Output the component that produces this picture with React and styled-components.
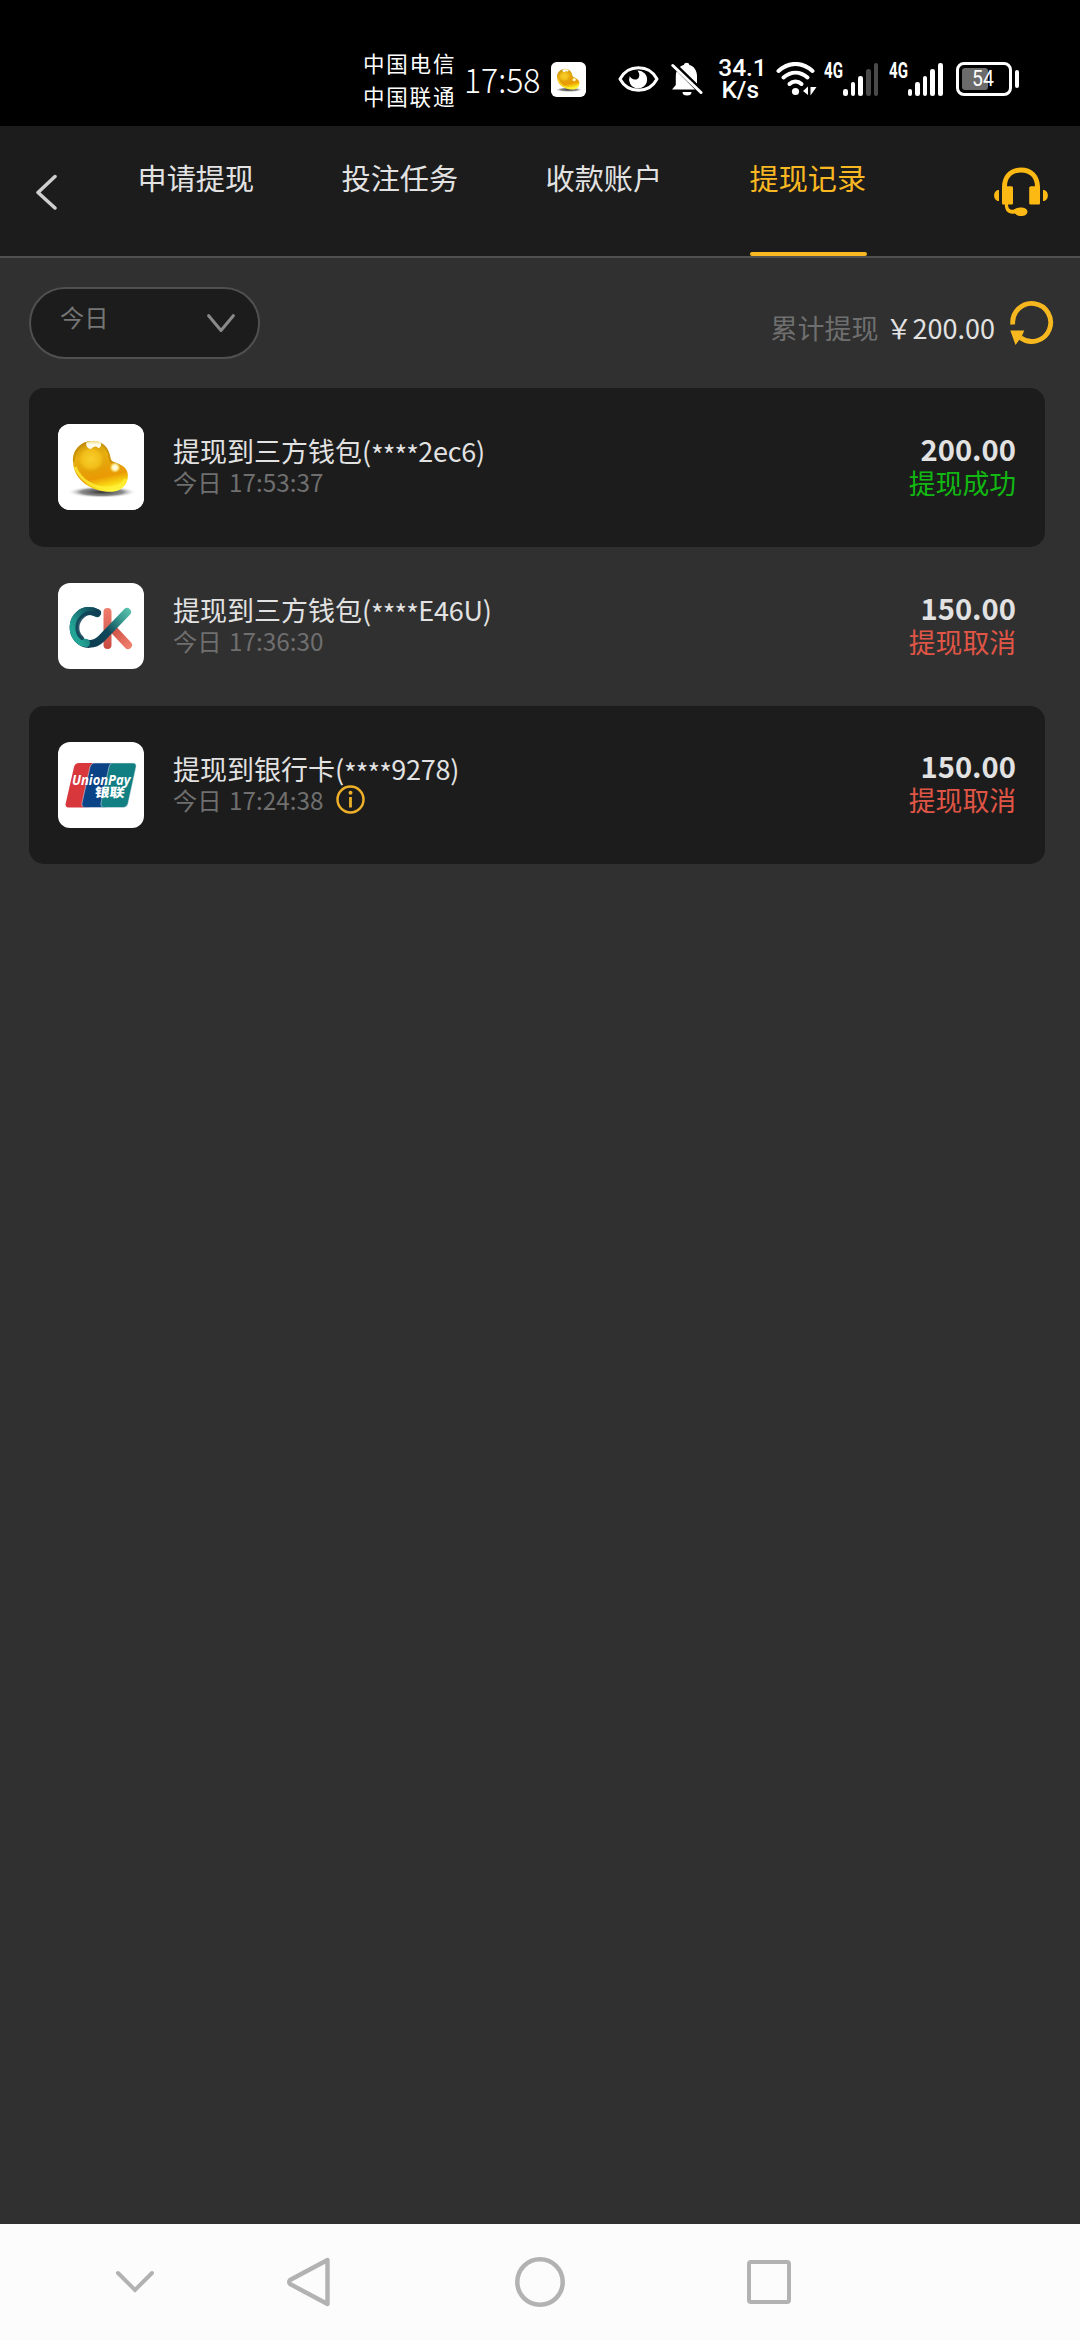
import React, { useId } from "react";
import styled, { createGlobalStyle } from "styled-components";

const cjk = '"Noto Sans CJK SC", sans-serif';

const Global = createGlobalStyle`
  * { box-sizing: border-box; }
  body { margin: 0; background: #303030; font-family: ${cjk}; }
  svg { display: block; flex: none; }
`;

const Screen = styled.div`
  width: 1080px;
  height: 2340px;
  display: flex;
  flex-direction: column;
  background: #303030;
  color: #e2e2e2;
  overflow: hidden;
`;

/* ---------- status bar ---------- */
const StatusBar = styled.div`
  height: 126px;
  flex: none;
  padding: 32px 61px 0 363px;
  display: flex;
  align-items: center;
  background: #000;
  color: #fff;
`;
const Carriers = styled.div`
  width: 94px;
  font-size: 21.5px;
  letter-spacing: 1.8px;
  line-height: 33px;
  white-space: nowrap;
`;
const Clock = styled.div`
  width: 77px;
  margin-left: 8px;
  font-size: 34px;
  line-height: 40px;
  font-weight: 300;
  white-space: nowrap;
`;
const Squeezed = styled.span`
  display: inline-block;
  transform: scaleX(${(p) => p.$by});
  transform-origin: left center;
`;
const StatusIcon = styled.div`
  margin-left: ${(p) => p.$gap}px;
  flex: none;
`;
const Speed = styled.div`
  width: 44px;
  margin-left: 15px;
  font: 500 24.5px/22px Roboto, sans-serif;
  text-align: center;
  white-space: nowrap;
`;
const Signal = styled.div`
  width: 55px;
  height: 34px;
  margin-left: ${(p) => p.$gap}px;
  display: flex;
  align-items: flex-start;
`;
const Generation = styled.div`
  width: 18px;
  font: 700 21.5px/17px Roboto, sans-serif;
  white-space: nowrap;
`;
const Bars = styled.div`
  height: 34px;
  display: flex;
  align-items: flex-end;
  gap: 3px;
  margin-left: 1px;
`;
const Bar = styled.div`
  width: 4.6px;
  height: ${(p) => p.$height}px;
  border-radius: 2.3px;
  background: ${(p) => (p.$on ? "#fff" : "#4a4a4a")};
`;
const Battery = styled.div`
  margin-left: 13px;
  display: flex;
  align-items: center;
  gap: 3px;
`;
const BatteryBody = styled.div`
  width: 56px;
  height: 34px;
  border: 3px solid #fff;
  border-radius: 8px;
  padding: 3px;
`;
const BatteryFill = styled.div`
  width: 26px;
  height: 22px;
  border-radius: 3px;
  background: #6b6b6b;
  padding-left: 10px;
  font: 400 22px/22px Roboto, sans-serif;
`;
const BatteryCap = styled.div`
  width: 4px;
  height: 18px;
  border-radius: 2px;
  background: #fff;
`;

/* ---------- header ---------- */
const Header = styled.header`
  height: 132px;
  flex: none;
  display: flex;
  align-items: flex-start;
  background: #1c1c1c;
  border-bottom: 2px solid #505050;
`;
const BackButton = styled.div`
  width: 137.5px;
  padding: 48px 0 0 35px;
`;
const Tabs = styled.nav`
  display: flex;
  gap: 87px;
`;
const Tab = styled.div`
  width: 117px;
  height: 130px;
  display: flex;
  flex-direction: column;
  justify-content: space-between;
  font-size: 29.16px;
  line-height: 103px;
  white-space: nowrap;
  color: ${(p) => (p.$active ? "#f9b822" : "#e2e2e2")};
`;
const Underline = styled.div`
  height: 4px;
  border-radius: 2px;
  background: #f9b822;
`;
const Support = styled.div`
  margin: 41px 0 0 127.5px;
`;

/* ---------- filter row ---------- */
const Toolbar = styled.div`
  height: 130px;
  flex: none;
  padding: 29px 26px 0 29px;
  display: flex;
  align-items: flex-start;
`;
const Select = styled.div`
  width: 231px;
  height: 72px;
  padding: 0 23px 0 29px;
  border: 2px solid #505050;
  border-radius: 36px;
  background: #1c1c1c;
  display: flex;
  justify-content: space-between;
  font-size: 24.3px;
  line-height: 56px;
  color: #767676;
`;
const SelectArrow = styled.div`
  padding-top: 25px;
`;
const Summary = styled.div`
  margin-left: auto;
  padding-top: 21px;
  display: flex;
  font-size: 27px;
  line-height: 40px;
  white-space: nowrap;
  color: #6f6f6f;
`;
const Total = styled.span`
  margin-left: 7px;
  color: #e2e2e2;
`;
const Refresh = styled.div`
  margin: 14px 0 0 15px;
`;

/* ---------- records ---------- */
const List = styled.main`
  flex: 1;
  padding: 0 35px 0 29px;
`;
const Record = styled.div`
  height: 158.8px;
  padding: 0 29px;
  border-radius: 15px;
  display: flex;
  align-items: center;
  &:nth-child(odd) {
    background: #1c1c1c;
  }
`;
const Logo = styled.div`
  width: 86px;
  height: 86px;
  flex: none;
  border-radius: 12px;
  overflow: hidden;
  background: #fff;
`;
const Detail = styled.div`
  flex: 1;
  margin-left: 29px;
  padding-bottom: 4px;
`;
const Title = styled.div`
  font-size: 27px;
  line-height: 34px;
  white-space: nowrap;
`;
const Account = styled.span`
  letter-spacing: -0.2px;
`;
const Mask = styled.span`
  line-height: 0;
  vertical-align: -4px;
  letter-spacing: -0.8px;
`;
const Time = styled.div`
  height: 28px;
  display: flex;
  align-items: center;
  gap: 13px;
  font-size: 24.3px;
  line-height: 28px;
  word-spacing: 2px;
  color: #6f6f6f;
  white-space: pre;
`;
const Result = styled.div`
  padding-bottom: 6px;
  text-align: right;
`;
const Amount = styled.div`
  font-size: 29.16px;
  line-height: 37px;
  font-weight: 700;
`;
const State = styled.div`
  font-size: 26.8px;
  line-height: 32px;
  color: ${(p) => (p.$ok ? "#12b812" : "#e05646")};
`;

/* ---------- system navigation ---------- */
const NavBar = styled.footer`
  height: 116px;
  flex: none;
  padding-left: 115px;
  display: flex;
  align-items: center;
  background: #fcfcfc;
`;
const NavKey = styled.div`
  width: ${(p) => p.$width}px;
`;

/* ---------- drawings ---------- */
function Bean({ size, tile }) {
  const id = useId().replace(/[^a-zA-Z0-9]/g, "");
  return (
    <svg width={size} height={size} viewBox="0 0 86 86">
      <defs>
        <linearGradient id={id + "g"} x1="0.3" y1="0" x2="0.55" y2="1">
          <stop offset="0" stopColor="#c99408" />
          <stop offset="0.3" stopColor="#e9b210" />
          <stop offset="0.55" stopColor="#e6a008" />
          <stop offset="0.72" stopColor="#ea9a04" />
          <stop offset="0.88" stopColor="#f9d512" />
          <stop offset="1" stopColor="#fff53a" />
        </linearGradient>
        <radialGradient id={id + "r"}>
          <stop offset="0" stopColor="#f8cf2c" />
          <stop offset="0.6" stopColor="#f2bd18" />
          <stop offset="1" stopColor="#d99a08" stopOpacity="0" />
        </radialGradient>
        <radialGradient id={id + "s"}>
          <stop offset="0" stopColor="#333" />
          <stop offset="0.6" stopColor="#666" stopOpacity="0.75" />
          <stop offset="1" stopColor="#fff" stopOpacity="0" />
        </radialGradient>
        <radialGradient id={id + "h"}>
          <stop offset="0" stopColor="#fff" />
          <stop offset="0.5" stopColor="#fff3b0" />
          <stop offset="1" stopColor="#ffe760" stopOpacity="0" />
        </radialGradient>
        <linearGradient id={id + "t"} x1="0" y1="0" x2="0" y2="1">
          <stop offset="0" stopColor="#f3dc7a" />
          <stop offset="0.5" stopColor="#fffdf2" />
          <stop offset="1" stopColor="#fffbe6" />
        </linearGradient>
      </defs>
      <rect width="86" height="86" rx={tile} fill="#fff" />
      <ellipse cx="44" cy="68" rx="35" ry="6" fill={`url(#${id}s)`} />
      <path
        d="M15 38C14 26 23 17 34 17C45 17 51 24 52.500 34C53 38 57 38 63 41C69 44 71.500 50 69 57C66 66 57 69 47 67.500C29 65 16 54 15 38Z"
        fill={`url(#${id}g)`}
      />
      <path d="M16 38C15 27 24 18 34 18C44 18 50 24 51.500 34C52 40 57 38 62 42" stroke="#b98205" strokeWidth="2" fill="none" opacity="0.55" />
      <ellipse cx="33" cy="35" rx="16" ry="15" fill={`url(#${id}r)`} />
      <path d="M17 43C23 57 36 64 49 64C59 64 65 61 68 55" stroke="#fff23a" strokeWidth="3" fill="none" opacity="0.75" />
      <path d="M28 19C32 16 39 16 43 19C44 22 41 26 39 23C37 22 35 23 33 25C30 25 28 22 28 19Z" fill={`url(#${id}t)`} />
      <ellipse cx="57" cy="43.500" rx="5.500" ry="5.500" fill={`url(#${id}h)`} />
    </svg>
  );
}

const CkLogo = () => (
  <svg width="86" height="86" viewBox="0 0 86 86" fill="none" strokeLinecap="round">
    <defs>
      <linearGradient id="ckStem" x1="0" y1="26" x2="0" y2="66" gradientUnits="userSpaceOnUse">
        <stop stopColor="#f07c6c" />
        <stop offset="1" stopColor="#c84a40" />
      </linearGradient>
      <linearGradient id="ckLeg" x1="54" y1="46" x2="72" y2="64" gradientUnits="userSpaceOnUse">
        <stop stopColor="#cc4e44" />
        <stop offset="1" stopColor="#f07f6e" />
      </linearGradient>
      <linearGradient id="ckArm" x1="34" y1="62" x2="72" y2="26" gradientUnits="userSpaceOnUse">
        <stop stopColor="#0d3e52" />
        <stop offset="0.4" stopColor="#10485a" />
        <stop offset="0.75" stopColor="#3a9d91" />
        <stop offset="1" stopColor="#5cc3ae" />
      </linearGradient>
      <linearGradient id="ckRing" x1="14" y1="44" x2="40" y2="30" gradientUnits="userSpaceOnUse">
        <stop stopColor="#23a596" />
        <stop offset="1" stopColor="#0f4256" />
      </linearGradient>
    </defs>
    <path d="M49.5 29V62" stroke="url(#ckStem)" strokeWidth="8" />
    <path d="M55 46L70 62" stroke="url(#ckLeg)" strokeWidth="8" />
    <path d="M39 30C33 27 26 27 21 32C14 38 14 49 20 56C26 63 37 62 43 56L69 29" stroke="url(#ckArm)" strokeWidth="8" />
    <path d="M39 30C33 27 26 27 21 32C14 38 14 49 20 56C22 58 25 60 28 60" stroke="url(#ckRing)" strokeWidth="8" />
    <path d="M39 31C33 29 27 30 23 35C18 41 18 50 24 55" stroke="#0f4055" strokeWidth="4" opacity="0.85" />
  </svg>
);

const UnionPayLogo = () => (
  <svg width="86" height="86" viewBox="0 0 86 86">
    <path d="M21 21H40L31 65.500H11C8 65.500 7 63.500 7.800 61L16 25C16.700 22.500 18.500 21 21 21Z" fill="#d8373c" />
    <path d="M37 21H58L48 65.500H27C24.500 65.500 23.500 63.500 24 61L32 25C32.700 22.500 34.500 21 37 21Z" fill="#0a4386" stroke="#e6edf2" strokeWidth="0.500" />
    <path d="M55 21H75C77.500 21 78.500 22.500 78 25L70 61.500C69.300 64 67.500 65.500 65 65.500H46C43.500 65.500 42.500 63.500 43 61L51 25C51.600 22.500 53 21 55 21Z" fill="#128083" stroke="#e6edf2" strokeWidth="0.500" />
    <text x="14" y="43" fontFamily='"Open Sans", sans-serif' fontWeight="700" fontStyle="italic" fontSize="14.500" fill="#fff" textLength="58.500" lengthAdjust="spacingAndGlyphs">UnionPay</text>
    <text x="36" y="55" fontFamily={cjk} fontWeight="900" fontSize="12.500" fill="#fff" textLength="30" lengthAdjust="spacingAndGlyphs" transform="skewX(-6) translate(6 0)">银联</text>
  </svg>
);

const Eye = () => (
  <svg width="41" height="28" viewBox="0 0 41 28">
    <path d="M2 14C10 -1 31 -1 39 14C31 29 10 29 2 14Z" fill="none" stroke="#fff" strokeWidth="3" strokeLinejoin="round" />
    <path d="M19.500 5.500A9 9 0 1 1 11.800 11C13 15 19.500 16 21 12C22 9 20.500 7 19.500 5.500Z" fill="#fff" />
  </svg>
);

const Muted = () => (
  <svg width="32" height="36" viewBox="0 0 32 36">
    <path d="M9 6L26 22.500V15C26 9 22.500 5 18.500 4A2.900 2.900 0 0 0 12.800 4C11.500 4.300 10 5 9 6Z" fill="#fff" />
    <path d="M5.500 10.500C5 12 4.800 14 4.800 16V24L1 28.500H24L6 10.500Z" fill="#fff" />
    <path d="M11.500 31H20.500A4.500 3.600 0 0 1 11.500 31Z" fill="#fff" />
    <path d="M1.800 4.500L30 31.500" stroke="#fff" strokeWidth="3" strokeLinecap="round" />
  </svg>
);

const Wifi = () => (
  <svg width="41" height="34" viewBox="0 0 41 34" fill="none" stroke="#fff" strokeWidth="4" strokeLinecap="round">
    <path d="M2.500 9C13 -0.500 26 -0.500 36.500 9" />
    <path d="M7.500 15.500C15 9 24 9 31.500 15.500" />
    <path d="M13.500 22C17 18.500 22 18.500 25.500 22" />
    <circle cx="19.500" cy="29.500" r="3.600" fill="#fff" stroke="none" />
    <path d="M27 29L32 24.500V33ZM34.500 25H40.500L34.500 33.500Z" fill="#fff" stroke="none" />
  </svg>
);

const Headset = () => (
  <svg width="54" height="50" viewBox="0 0 54 50" fill="#fdb913">
    <path d="M8 20C8 8 16 0.500 27 0.500S46 8 46 20V36C46 37 45.500 37.500 44.500 37.500H37C36 37.500 35.200 37 35.200 36V21C35.200 20 36 19.300 37 19.300H41C41 11 36 5.500 27 5.500S13 11 13 19.300H17.500C18.500 19.300 19 20 19 21V36C19 37 18.500 37.500 17.500 37.500H14C14 42 16.500 43.500 20 42.500C24 39 33.500 40 33.500 44.500C33.500 50 24 50.500 21 46.500C14 47.500 11 44 10.700 37.500H9.500C8.500 37.500 8 37 8 36Z" />
    <path d="M5 23V34C-1.500 34 -1.500 23 5 23ZM49 23V34C55.500 34 55.500 23 49 23Z" />
  </svg>
);

const RefreshIcon = () => (
  <svg width="44" height="44" viewBox="0 0 44 44">
    <path d="M2.800 23.500A19 19 0 1 1 10.500 36.800" fill="none" stroke="#f7b81f" strokeWidth="4.800" />
    <path d="M0.300 29.500H14.300L11.500 36L5.500 44Z" fill="#f7b81f" />
  </svg>
);

const Info = () => (
  <svg width="29" height="29" viewBox="0 0 29 29" fill="none" stroke="#eeb02a">
    <circle cx="14.500" cy="14.500" r="13" strokeWidth="2.500" />
    <path d="M14.500 12V22.500" strokeWidth="2.800" />
    <circle cx="14.500" cy="7.800" r="2" fill="#eeb02a" stroke="none" />
  </svg>
);

const records = [
  { name: "提现到三方钱包", account: "2ec6", time: "17:53:37", amount: "200.00", state: "提现成功", ok: true, logo: <Bean size={86} tile={0} /> },
  { name: "提现到三方钱包", account: "E46U", time: "17:36:30", amount: "150.00", state: "提现取消", logo: <CkLogo /> },
  { name: "提现到银行卡", account: "9278", time: "17:24:38", amount: "150.00", state: "提现取消", info: true, logo: <UnionPayLogo /> },
];
const tabs = ["申请提现", "投注任务", "收款账户", "提现记录"];
const barHeights = [7, 14, 20, 27, 33];

const SignalMeter = ({ gap, level }) => (
  <Signal $gap={gap}>
    <Generation><Squeezed $by={0.7}>4G</Squeezed></Generation>
    <Bars>
      {barHeights.map((h, i) => <Bar key={h} $height={h} $on={i < level} />)}
    </Bars>
  </Signal>
);

export default function App() {
  return (
    <Screen>
      <Global />
      <StatusBar>
        <Carriers><div>中国电信</div><div>中国联通</div></Carriers>
        <Clock><Squeezed $by={0.94}>17:58</Squeezed></Clock>
        <StatusIcon $gap={10}><Bean size={35} tile={14} /></StatusIcon>
        <StatusIcon $gap={32}><Eye /></StatusIcon>
        <StatusIcon $gap={12}><Muted /></StatusIcon>
        <Speed><div>34.1</div><div>K/s</div></Speed>
        <StatusIcon $gap={14}><Wifi /></StatusIcon>
        <SignalMeter gap={7} level={3} />
        <SignalMeter gap={10} level={5} />
        <Battery>
          <BatteryBody><BatteryFill><Squeezed $by={0.88}>54</Squeezed></BatteryFill></BatteryBody>
          <BatteryCap />
        </Battery>
      </StatusBar>

      <Header>
        <BackButton>
          <svg width="22" height="36" viewBox="0 0 22 36" fill="none" stroke="#cfcfcf" strokeWidth="3.500" strokeLinecap="round" strokeLinejoin="round">
            <path d="M20 2.500L3 18.500L20 34" />
          </svg>
        </BackButton>
        <Tabs>
          {tabs.map((t, i) => (
            <Tab key={t} $active={i === 3}>
              {t}
              {i === 3 && <Underline />}
            </Tab>
          ))}
        </Tabs>
        <Support><Headset /></Support>
      </Header>

      <Toolbar>
        <Select>
          今日
          <SelectArrow>
            <svg width="28" height="19" viewBox="0 0 28 19" fill="none" stroke="#8a8a8a" strokeWidth="3" strokeLinecap="round" strokeLinejoin="round">
              <path d="M1.700 1.700L14 16.500L26.300 1.700" />
            </svg>
          </SelectArrow>
        </Select>
        <Summary>累计提现<Total>￥200.00</Total></Summary>
        <Refresh><RefreshIcon /></Refresh>
      </Toolbar>

      <List>
        {records.map((r) => (
          <Record key={r.time}>
            <Logo>{r.logo}</Logo>
            <Detail>
              <Title>{r.name}<Account>(<Mask>****</Mask>{r.account})</Account></Title>
              <Time>今日 {r.time}{r.info && <Info />}</Time>
            </Detail>
            <Result>
              <Amount>{r.amount}</Amount>
              <State $ok={r.ok}>{r.state}</State>
            </Result>
          </Record>
        ))}
      </List>

      <NavBar>
        <NavKey $width={172}>
          <svg width="40" height="24" viewBox="0 0 40 24" fill="none" stroke="#b2b2b2" strokeWidth="4" strokeLinecap="round">
            <path d="M3 3L20 20L37 3" />
          </svg>
        </NavKey>
        <NavKey $width={228}>
          <svg width="43" height="50" viewBox="0 0 43 50" fill="none" stroke="#b2b2b2" strokeWidth="4.400" strokeLinejoin="round">
            <path d="M40.500 3V47L3 27Q1.500 25 3 23Z" />
          </svg>
        </NavKey>
        <NavKey $width={232}>
          <svg width="50" height="50" viewBox="0 0 50 50" fill="none" stroke="#b2b2b2" strokeWidth="4.500">
            <circle cx="25" cy="25" r="22.700" />
          </svg>
        </NavKey>
        <NavKey $width={44}>
          <svg width="44" height="44" viewBox="0 0 44 44" fill="none" stroke="#b2b2b2" strokeWidth="4">
            <rect x="2" y="2" width="40" height="40" rx="2" />
          </svg>
        </NavKey>
      </NavBar>
    </Screen>
  );
}
